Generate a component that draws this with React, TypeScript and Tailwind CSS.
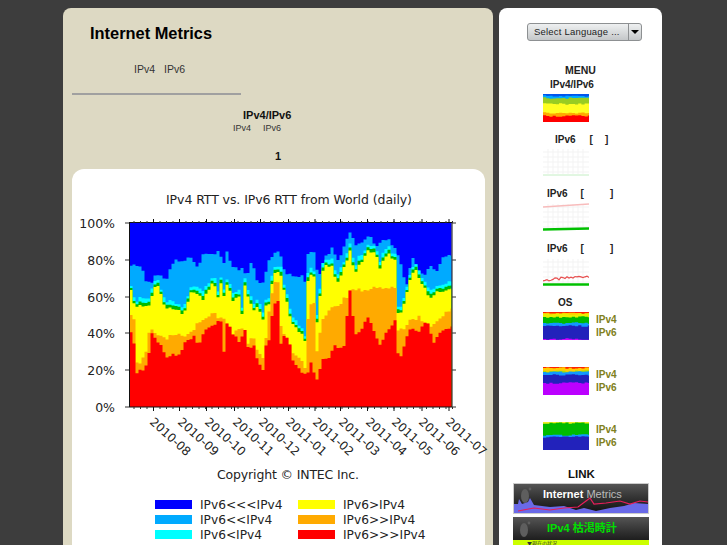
import React from "react";

// chart boundaries, read off the reference in 3x crop units (x from 70px, y from 180px)
const LIGHT = [[180,265],[195,257],[218,257],[222,305],[245,305],[260,280],[290,305],[300,270],[320,240],[345,240],[360,235],[385,265],[400,220],[440,225],[450,210],[460,260],[470,210],[490,265],[515,265],[530,290],[545,245],[565,310],[585,300],[592,255],[610,220],[630,215],[640,270],[670,290],[700,290],[705,300],[715,215],[735,215],[745,305],[760,245],[785,205],[805,240],[840,160],[860,200],[895,165],[920,195],[950,175],[975,205],[990,235],[1010,320],[1025,230],[1060,290],[1080,250],[1100,280],[1120,225],[1145,225]];
const YELLOW = [[180,325],[195,380],[215,380],[235,380],[245,345],[258,320],[270,325],[285,385],[320,390],[340,405],[360,340],[385,345],[400,360],[430,310],[445,350],[450,265],[458,380],[468,300],[490,370],[505,330],[515,410],[525,320],[550,390],[565,380],[585,430],[592,315],[598,380],[610,275],[630,280],[650,360],[665,430],[685,450],[705,480],[715,285],[735,290],[740,440],[760,260],[785,260],[805,310],[820,270],[840,210],[855,280],[870,250],[895,210],[915,215],[930,260],[955,220],[975,240],[982,405],[1000,385],[1020,300],[1035,270],[1060,320],[1080,350],[1100,335],[1120,340],[1145,320]];
const ORANGE = [[180,410],[195,415],[197,550],[215,550],[232,500],[240,440],[260,460],[290,475],[320,460],[345,470],[370,450],[385,430],[400,420],[430,400],[455,420],[462,420],[475,450],[490,460],[510,450],[525,450],[535,490],[550,470],[565,520],[585,540],[592,400],[598,400],[610,310],[630,310],[632,430],[655,505],[685,530],[710,570],[715,375],[735,375],[740,520],[755,430],[780,385],[810,370],[830,350],[845,330],[890,330],[930,320],[975,320],[982,450],[1000,450],[1020,420],[1050,410],[1070,460],[1100,420],[1145,390]];
const RED = [[180,462],[190,465],[197,575],[215,575],[232,555],[240,490],[250,440],[258,500],[270,480],[280,510],[292,540],[310,525],[330,520],[345,490],[360,480],[375,470],[385,510],[400,460],[420,440],[440,430],[455,420],[462,510],[470,430],[490,460],[510,490],[525,450],[535,510],[550,490],[565,550],[585,570],[592,410],[598,500],[610,365],[630,365],[632,500],[640,470],[655,470],[670,550],[685,565],[710,590],[725,545],[740,605],[755,540],[775,535],[795,500],[820,510],[840,335],[855,460],[870,460],[895,405],[910,450],[930,490],[950,460],[980,420],[985,540],[1000,510],[1020,445],[1045,460],[1070,420],[1090,485],[1110,460],[1145,435]];

const rnd = (i: number) => {
  const s = Math.sin(i * 12.9898) * 43758.5453;
  return s - Math.floor(s);
};

const at = (p: number[][], z: number) => {
  if (z <= p[0][0]) return p[0][1];
  for (let i = 1; i < p.length; i++) {
    if (z <= p[i][0]) {
      const t = (z - p[i - 1][0]) / Math.max(1, p[i][0] - p[i - 1][0]);
      return p[i - 1][1] + (p[i][1] - p[i - 1][1]) * t;
    }
  }
  return p[p.length - 1][1];
};

const columns = Array.from({ length: 108 }, (_, i) => 129.5 + i * 3);

const stepArea = (top: (i: number, x: number) => number) => {
  let d = "M129.5 407";
  columns.forEach((x, i) => {
    const y = top(i, x);
    d += `L${x} ${y}L${Math.min(x + 3, 451.5)} ${y}`;
  });
  return d + "L451.5 407Z";
};

const yOf = (pts: number[][], i: number, x: number, k: number) =>
  180 + at(pts, (x + 1.5 - 70) * 3) / 3 + (rnd(i * k) - 0.5) * 4;

const redTop = (i: number, x: number) => yOf(RED, i, x, 1.3);
const orangeTop = (i: number, x: number) => Math.min(redTop(i, x), yOf(ORANGE, i, x, 2.1));
const yellowTop = (i: number, x: number) => Math.min(orangeTop(i, x), yOf(YELLOW, i, x, 3.7));
const greenTop = (i: number, x: number) => yellowTop(i, x) - 2 - rnd(i * 5.1) * 2;
const cyanTop = (i: number, x: number) => greenTop(i, x) - 2 - rnd(i * 6.3) * 3;
const lightTop = (i: number, x: number) => Math.min(cyanTop(i, x), yOf(LIGHT, i, x, 4.9));

const MONTHS = ["2010-08", "2010-09", "2010-10", "2010-11", "2010-12", "2011-01", "2011-02", "2011-03", "2011-04", "2011-05", "2011-06", "2011-07"];
const MONTH_X = [148, 176, 203, 231, 257, 284, 311, 337, 364, 390, 417, 444];
const MAJOR = [153.5, 179.5, 206.5, 234.5, 260.5, 288.5, 315, 340.5, 367.5, 394, 422, 449];
const MINOR = Array.from({ length: 50 }, (_, i) => 134 + i * 6.5);
const Y_TICKS = [[223, "100%"], [260, "80%"], [297, "60%"], [333, "40%"], [370, "20%"], [407, "0%"]] as const;
const LEGEND = [
  [155, 200, 509, "#0000ff", "IPv6<<<IPv4"],
  [155, 200, 524, "#00aaff", "IPv6<<IPv4"],
  [155, 200, 539, "#00ffff", "IPv6<IPv4"],
  [298, 343, 509, "#ffff00", "IPv6>IPv4"],
  [298, 343, 524, "#ffaa00", "IPv6>>IPv4"],
  [298, 343, 539, "#ff0000", "IPv6>>>IPv4"],
] as const;

function RttChart() {
  return (
    <svg width="413" height="376" viewBox="72 169 413 376" className="block overflow-visible font-['DejaVu_Sans',sans-serif]">
      <text x="289" y="204" textAnchor="middle" fontSize="12.5" fill="#222" textLength="246">IPv4 RTT vs. IPv6 RTT from World (daily)</text>
      <rect x="129.5" y="223" width="322" height="184" fill="#0000ff" />
      <path d={stepArea(lightTop)} fill="#00aaff" />
      <path d={stepArea(cyanTop)} fill="#00ffff" />
      <path d={stepArea(greenTop)} fill="#00bb00" />
      <path d={stepArea(yellowTop)} fill="#ffff00" />
      <path d={stepArea(orangeTop)} fill="#ffaa00" />
      <path d={stepArea(redTop)} fill="#ff0000" />
      <rect x="129.5" y="222.5" width="322.5" height="184.5" fill="none" stroke="#111" />
      {MINOR.map((x) => (
        <g key={x} stroke="#333">
          <path d={`M${x} 223V221`} />
          <path d={`M${x} 407V409`} />
        </g>
      ))}
      {MAJOR.map((x) => (
        <g key={x} stroke="#111">
          <path d={`M${x} 223V219`} />
          <path d={`M${x} 407V411`} />
        </g>
      ))}
      {Y_TICKS.map(([y, label]) => (
        <g key={label}>
          <path d={`M125 ${y}H129M452 ${y}H456`} stroke="#333" />
          <text x="115" y={y + 5} textAnchor="end" fontSize="12.5" fill="#222">{label}</text>
        </g>
      ))}
      {MONTHS.map((m, i) => (
        <text key={m} transform={`translate(${MONTH_X[i] + 1} ${423}) rotate(42)`} fontSize="12" fill="#222">{m}</text>
      ))}
      <text x="288" y="479" textAnchor="middle" fontSize="12.5" fill="#222" textLength="142">Copyright © INTEC Inc.</text>
      {LEGEND.map(([sx, tx, y, color, label]) => (
        <g key={label}>
          <rect x={sx} y={y - 9} width="37" height="9" fill={color} />
          <text x={tx} y={y} fontSize="12.2" fill="#222">{label}</text>
        </g>
      ))}
    </svg>
  );
}

// small stacked thumbnails of the sidebar
function StackThumb({ bands, seed }: { bands: [string, number][]; seed: number }) {
  return (
    <svg width="46" height="28" className="block">
      {bands.map(([color, top], b) => (
        <path
          key={b}
          fill={color}
          d={
            "M0 28" +
            Array.from({ length: 15 }, (_, i) => {
              const y = top === 0 ? 0 : top + (rnd(i * (b + 2) + seed) - 0.5) * 1.6;
              return `L${i * 3.2} ${y}L${(i + 1) * 3.2} ${y}`;
            }).join("") +
            "L46 28Z"
          }
        />
      ))}
    </svg>
  );
}

function GridThumb({ line }: { line: "none" | "top" | "spiky" }) {
  const spikes = Array.from({ length: 24 }, (_, i) => `${i * 2} ${24 - i * 0.2 - rnd(i + 4) * 3}`).join(" ");
  return (
    <svg width="46" height="28" className="block">
      {[5, 10, 15, 20, 25, 30, 35, 40].map((x) => (
        <path key={x} d={`M${x} 1V26`} stroke="#f3f3f3" />
      ))}
      {[4, 9, 14, 19, 24].map((y) => (
        <path key={y} d={`M0 ${y}H46`} stroke="#f3f3f3" />
      ))}
      {line === "none" && <path d="M0 27H46" stroke="#c4eec4" />}
      {line === "top" && <path d="M0 4L46 1" stroke="#f8bcbc" strokeWidth="1.5" />}
      {line === "top" && <path d="M0 26.5L46 25.5" stroke="#00c000" strokeWidth="2.5" />}
      {line === "spiky" && <polyline points={spikes} fill="none" stroke="#e85050" strokeWidth="1.2" />}
      {line === "spiky" && <path d="M0 26.5H46" stroke="#00c000" strokeWidth="2.5" />}
    </svg>
  );
}

const Title = ({ children, className }: { children: React.ReactNode; className: string }) => (
  <div className={`h-[12px] flex items-center text-[10px] leading-none font-bold text-[#222] ${className}`}>{children}</div>
);

const OsRow = ({ bands, seed }: { bands: [string, number][]; seed: number }) => (
  <div className="flex items-center gap-[7px] ml-[44px]">
    <StackThumb bands={bands} seed={seed} />
    <div className="text-[10px] leading-[13px] font-bold text-[#808020]">
      <div>IPv4</div>
      <div>IPv6</div>
    </div>
  </div>
);

export default function App() {
  return (
    <div className="h-[545px] overflow-hidden bg-[#3d3d3d] pl-[63px] pt-[8px] flex gap-[6px] items-start font-['Liberation_Sans',Arial,sans-serif]">
      <main className="w-[430px] h-[600px] shrink-0 rounded-t-lg bg-[#ddd9c3] pl-[9px] pr-[8px]">
        <h1 className="pl-[18px] pt-[15px] text-[16.4px] leading-[21px] font-bold text-black">Internet Metrics</h1>
        <div className="pl-[62px] mt-[19px] text-[10.5px] leading-[13px] text-[#333]">
          <span>IPv4</span>
          <span className="ml-[9px]">IPv6</span>
        </div>
        <div className="w-[169px] h-[2px] bg-[#a0a0a0] mt-[17px]" />
        <div className="ml-[171px] mt-[13px] text-[11px] leading-[14px] font-bold text-[#111]">IPv4/IPv6</div>
        <div className="ml-[161px] text-[9px] leading-[12px] text-[#333]">
          <span>IPv4</span>
          <span className="ml-[12px]">IPv6</span>
        </div>
        <div className="ml-[203px] mt-[16px] text-[11px] leading-[13px] font-bold text-[#111]">1</div>
        <div className="mt-[6px] rounded-t-[12px] bg-white h-[400px]">
          <RttChart />
        </div>
      </main>

      <aside className="w-[163px] h-[600px] shrink-0 rounded-t-lg bg-white">
        <div className="ml-[28px] mt-[15px] w-[115px] h-[18px] flex rounded-[3px] border border-[#8d9092] bg-gradient-to-b from-[#eef0f1] to-[#c4c7c9] text-[9.5px] leading-[16px] tracking-[0.2px] text-[#222]">
          <div className="w-[100px] pl-[6px] whitespace-nowrap overflow-hidden">Select Language ...</div>
          <div className="flex-1 border-l border-[#8d9092] flex items-center justify-center">
            <div className="w-0 h-0 border-x-[4px] border-x-transparent border-t-[4px] border-t-black" />
          </div>
        </div>

        <div className="mt-[22px] h-[14px] pl-[66px] text-[10.5px] leading-[14px] font-bold text-[#222]">MENU</div>
        <Title className="ml-[51px] mt-[2px]">IPv4/IPv6</Title>
        <div className="ml-[44px] mt-[3px]">
          <StackThumb seed={2} bands={[["#0055ee", 0], ["#00aaff", 2], ["#99cc22", 4], ["#ffff22", 10], ["#ffaa00", 19], ["#ff0000", 22]]} />
        </div>

        <Title className="ml-[56px] mt-[12px] gap-[14px]"><span>IPv6</span><span>[<span className="ml-[12px]">]</span></span></Title>
        <div className="ml-[44px] mt-[2px]"><GridThumb line="none" /></div>

        <Title className="ml-[48px] mt-[12px] gap-[13px]"><span>IPv6</span><span>[<span className="ml-[26px]">]</span></span></Title>
        <div className="ml-[44px] mt-[3px]"><GridThumb line="top" /></div>

        <Title className="ml-[48px] mt-[12px] gap-[13px]"><span>IPv6</span><span>[<span className="ml-[26px]">]</span></span></Title>
        <div className="ml-[44px] mt-[3px]"><GridThumb line="spiky" /></div>

        <Title className="ml-[59px] mt-[11px]">OS</Title>
        <div className="mt-[3px]">
          <OsRow seed={5} bands={[["#ff2200", 0], ["#ffcc00", 1], ["#e8f000", 2], ["#00bb00", 5], ["#1199ff", 11], ["#2222bb", 14], ["#cc00ff", 27]]} />
        </div>
        <div className="mt-[27px]">
          <OsRow seed={9} bands={[["#ff2200", 0], ["#ffcc00", 1], ["#aadd00", 4], ["#1199ff", 5], ["#2222bb", 8], ["#bb00ff", 16]]} />
        </div>
        <div className="mt-[27px]">
          <OsRow seed={13} bands={[["#eeee22", 0], ["#00bb00", 1], ["#1199ff", 13], ["#2222bb", 15]]} />
        </div>

        <div className="mt-[17px] h-[14px] pl-[69px] text-[11.5px] leading-[14px] font-bold text-[#111]">LINK</div>

        <div className="relative ml-[14px] mt-[2px] w-[136px] h-[31px] overflow-hidden border border-[#cccccc] bg-gradient-to-b from-[#555555] to-[#111111]">
          <svg width="134" height="29" className="absolute left-0 top-0">
            <ellipse cx="11" cy="12" rx="4" ry="7" fill="#5e5e5e" />
            <circle cx="16" cy="5" r="1.4" fill="#5e5e5e" />
            <path d="M0 20L4 20L5 15L8 20L14 18L16 14L20 21L36 23L50 22L62 26L70 24L82 27L96 24L110 22L120 19L134 20V29H0Z" fill="#6a6ae8" />
            <path d="M4 27L20 24L36 26L50 24L64 23L72 17L76 14L80 20L92 19L106 17L116 20L126 17L134 18" fill="none" stroke="#e81e5a" strokeWidth="1.2" />
          </svg>
          <div className="absolute left-[29px] top-[3px] text-[11px] leading-[14px] whitespace-nowrap text-[#bbbbbb]">
            <span className="font-bold text-white">Internet</span> Metrics
          </div>
        </div>

        <div className="relative ml-[14px] mt-[3px] w-[136px] h-[29px] overflow-hidden bg-gradient-to-b from-[#555555] to-[#111111]">
          <svg width="30" height="24" className="absolute left-0 top-0">
            <ellipse cx="11" cy="13" rx="4" ry="7" fill="#5e5e5e" />
            <circle cx="16" cy="6" r="1.4" fill="#5e5e5e" />
          </svg>
          <div className="absolute left-[34px] top-[4px] text-[11px] leading-[15px] font-bold whitespace-nowrap text-[#00e000] font-['Liberation_Sans','Noto_Sans_CJK_JP',sans-serif]">IPv4 枯渇時計</div>
          <div className="absolute left-0 bottom-0 w-full h-[6px] bg-[#ccff00] pl-[14px] text-[5px] leading-[6px] text-[#333] font-['Noto_Sans_CJK_JP',sans-serif]">▼現在の状況</div>
        </div>
      </aside>
    </div>
  );
}
